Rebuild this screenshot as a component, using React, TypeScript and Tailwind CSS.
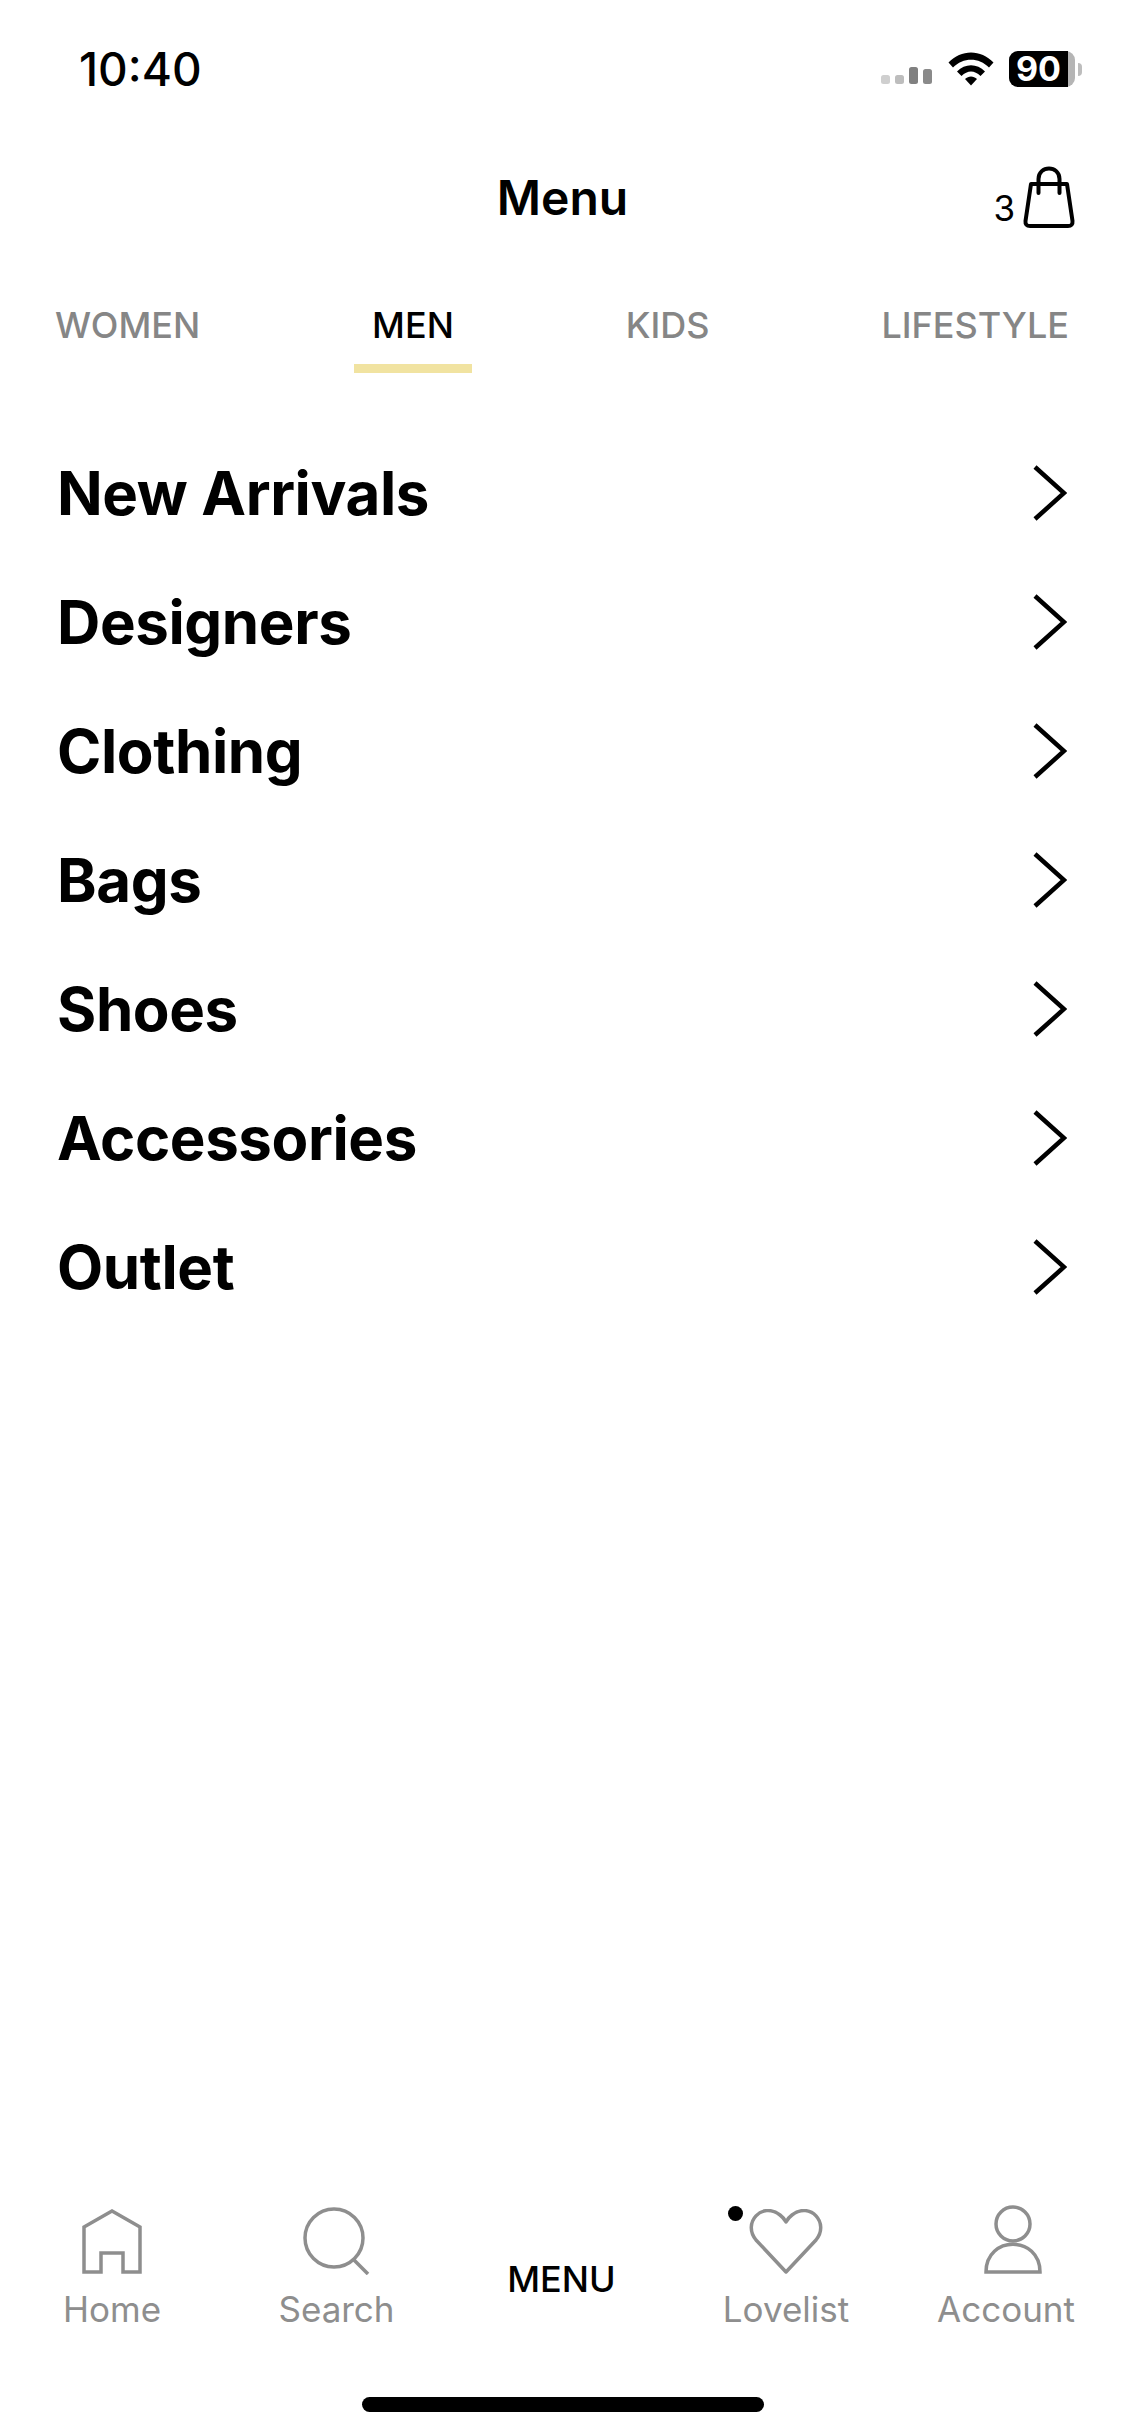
const font = { fontFamily: "Inter, 'Liberation Sans', sans-serif" };

const categories = ["New Arrivals", "Designers", "Clothing", "Bags", "Shoes", "Accessories", "Outlet"];
const tabs = ["WOMEN", "MEN", "KIDS", "LIFESTYLE"];

function StatusIcons() {
  return (
    <div className="flex items-center">
      <svg width="52" height="18" viewBox="0 0 52 18" className="mt-[14px]">
        <rect x="0" y="8" width="9" height="9" rx="2.5" fill="#cfcfcf" />
        <rect x="14" y="8" width="9" height="9" rx="2.5" fill="#bdbdbd" />
        <rect x="28" y="0" width="9" height="17" rx="2.5" fill="#808080" />
        <rect x="42" y="2" width="9" height="15" rx="2.5" fill="#8a8a8a" />
      </svg>
      <svg width="46" height="34" viewBox="0 0 46 34" className="ml-[15px]">
        <path d="M0.5 10.5 C13 -3 33 -3 45.500 10.500 L41 15.500 C31 5 15 5 5 15.500 Z" fill="#000" />
        <path d="M9 19.500 C17 11 29 11 37 19.500 L32.500 24 C26.500 18 19.500 18 13.500 24 Z" fill="#000" />
        <path d="M17 27 C20.500 23.500 25.500 23.500 29 27 L23 33.500 Z" fill="#000" />
      </svg>
      <div className="ml-[15px] flex h-[36px] w-[66px] items-center rounded-[9px] bg-[#b5b5b5]">
        <div className="flex h-full w-[59px] items-center justify-center rounded-l-[9px] bg-black text-[34px] leading-[36px] font-bold text-white">90</div>
      </div>
      <div className="ml-[3px] h-[13px] w-[4px] rounded-r-full bg-[#bdbdbd]" />
    </div>
  );
}

function BagIcon() {
  return (
    <svg width="52" height="62" viewBox="0 0 52 62" fill="none" stroke="#000" strokeWidth="4" strokeLinejoin="round" strokeLinecap="round">
      <path d="M8 18 H44 L49.500 55 Q50 60 45 60 H7 Q2 60 2.500 55 Z" />
      <path d="M15.500 27 V13 C15.500 -1 36.500 -1 36.500 13 V27" />
    </svg>
  );
}

function Chevron() {
  return (
    <svg width="34" height="56" viewBox="0 0 34 56" fill="none" stroke="#000" strokeWidth="4.500">
      <path d="M2 2 L31 28 L2 54" />
    </svg>
  );
}

function HomeIcon() {
  return (
    <svg width="60" height="66" viewBox="0 0 60 66" fill="none" stroke="#8e8e8e" strokeWidth="3.500">
      <path d="M2 18 L30 2 L58 18 V63 H41 V44 H19 V63 H2 Z" />
    </svg>
  );
}

function SearchIcon() {
  return (
    <svg width="68" height="68" viewBox="0 0 68 68" fill="none" stroke="#8e8e8e" strokeWidth="3.500">
      <circle cx="31" cy="31" r="29" />
      <path d="M50 52 L65 67" />
    </svg>
  );
}

function HeartIcon() {
  return (
    <svg width="76" height="66" viewBox="0 0 76 66" fill="none" stroke="#8e8e8e" strokeWidth="3.500" strokeLinejoin="round">
      <path d="M38 63 L8 31 C-6 14 14 -8 32 6 Q36 9 38 13 Q40 9 44 6 C62 -8 82 14 68 31 Z" />
    </svg>
  );
}

function AccountIcon() {
  return (
    <svg width="58" height="70" viewBox="0 0 58 70" fill="none" stroke="#8e8e8e" strokeWidth="3.500" className="ml-[14px]">
      <circle cx="29" cy="19" r="17" />
      <path d="M2 67 C2 30 56 30 56 67 Z" />
    </svg>
  );
}

function NavItem({ label, children }: { label: string; children: React.ReactNode }) {
  return (
    <div className="flex flex-col items-center">
      <div className="relative flex h-[70px] items-end justify-center">{children}</div>
      <span className="mt-[13px] text-[35px] leading-[42px] text-[#8e8e8e]">{label}</span>
    </div>
  );
}

export default function App() {
  return (
    <div className="flex h-[2436px] w-[1125px] flex-col bg-white text-black" style={font}>
      <div className="flex h-[136px] items-start justify-between pr-[43px] pl-[79px] pt-[41px]">
        <span className="text-[46px] leading-[56px] font-medium">10:40</span>
        <div className="pt-[10px]">
          <StatusIcons />
        </div>
      </div>

      <div className="relative flex h-[122px] items-center justify-center">
        <span className="pt-[2px] text-[48px] leading-[60px] font-semibold">Menu</span>
        <div className="absolute top-[30px] right-[50px] flex items-end gap-[8px]">
          <span className="text-[35px] leading-[40px]">3</span>
          <BagIcon />
        </div>
      </div>

      <div className="mt-[45px] flex items-center justify-between pr-[56px] pl-[55px]">
        {tabs.map((tab) => (
          <div key={tab} className={"relative text-[36px] leading-[44px] font-medium " + (tab === "MEN" ? "text-black" : "text-[#868686]")}>
            {tab}
            {tab === "MEN" && <div className="absolute -right-[18px] -bottom-[26px] -left-[18px] h-[9px] bg-[#f1e3a1]" />}
          </div>
        ))}
      </div>

      <div className="mt-[81px] flex flex-col pr-[58px] pl-[57px]">
        {categories.map((item) => (
          <div key={item} className="flex h-[129px] items-center justify-between">
            <span className="text-[60px] leading-[72px] font-bold tracking-[-0.4px]">{item}</span>
            <Chevron />
          </div>
        ))}
      </div>

      <div className="flex-1" />

      <div className="grid grid-cols-[224px_225px_225px_224px_216px] items-start">
        <NavItem label="Home">
          <HomeIcon />
        </NavItem>
        <NavItem label="Search">
          <SearchIcon />
        </NavItem>
        <div className="flex justify-center pt-[52px] text-[36px] leading-[44px] font-medium">MENU</div>
        <NavItem label="Lovelist">
          <div className="absolute top-[1px] -left-[20px] h-[15px] w-[15px] rounded-full bg-black" />
          <HeartIcon />
        </NavItem>
        <NavItem label="Account">
          <AccountIcon />
        </NavItem>
      </div>

      <div className="mt-[67px] mb-[24px] flex justify-center">
        <div className="h-[15px] w-[402px] rounded-full bg-black" />
      </div>
    </div>
  );
}
